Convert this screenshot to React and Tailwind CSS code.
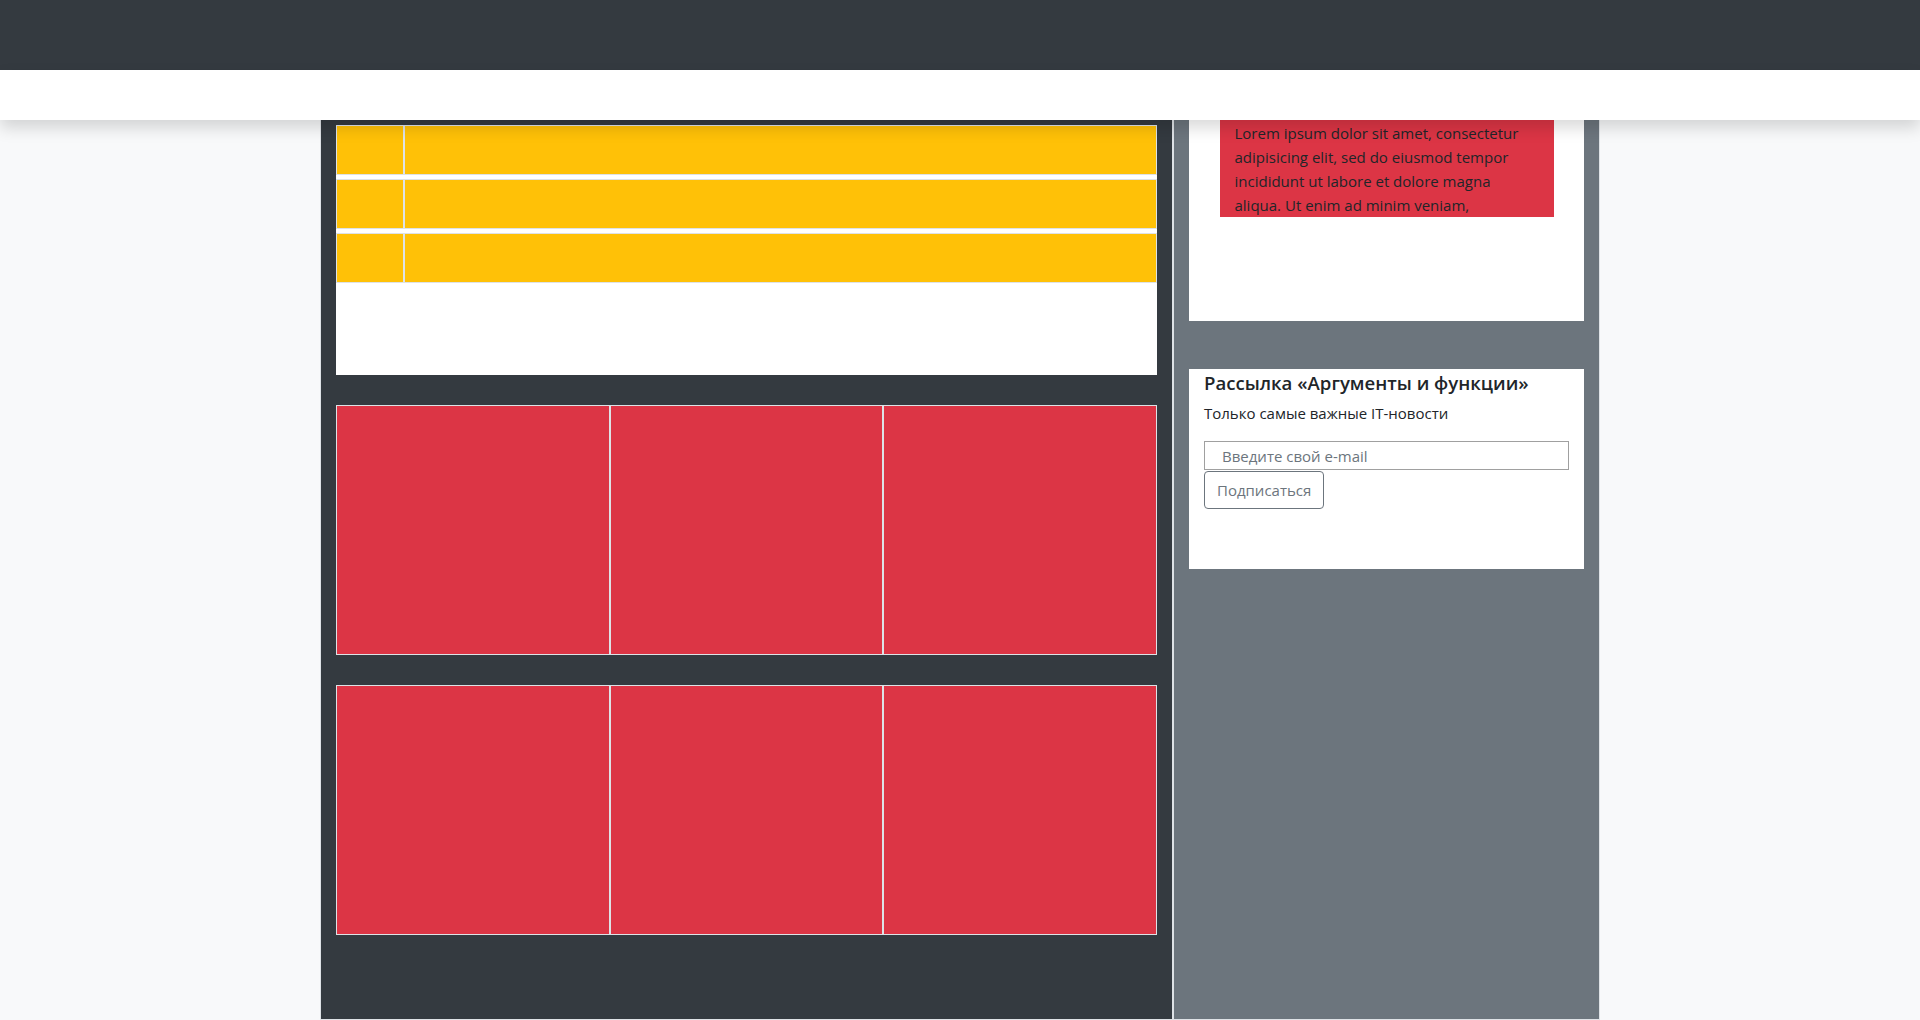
import React from 'react';

const font = "font-['Open_Sans','Noto_Sans',sans-serif]";

function YellowRow() {
  return (
    <div className="flex h-[50px]">
      <div className="w-[68px] border border-[#dee2e6] bg-[#ffc107]"></div>
      <div className="flex-1 border border-[#dee2e6] bg-[#ffc107]"></div>
    </div>
  );
}

function RedGrid() {
  return (
    <div className="mt-[30px] flex h-[250px]">
      {[0, 1, 2].map((i) => (
        <div key={i} className="flex-1 border border-[#dee2e6] bg-[#dc3545]"></div>
      ))}
    </div>
  );
}

export default function App() {
  return (
    <div className={`min-h-screen bg-[#f8f9fa] text-[#212529] ${font}`}>
      <div className="h-[70px] bg-[#343a40]"></div>
      <div className="relative z-10 h-[50px] bg-white shadow-[0_8px_16px_rgba(0,0,0,0.15)]"></div>

      <div className="mx-auto flex w-[1280px]">
        <div className="h-[900px] w-[853px] border-x border-b border-[#dee2e6] bg-[#343a40] px-[15px] pt-[5px]">
          <div className="flex h-[250px] flex-col gap-[4px] bg-white">
            <YellowRow />
            <YellowRow />
            <YellowRow />
          </div>
          <RedGrid />
          <RedGrid />
        </div>

        <div className="h-[900px] w-[427px] border-x border-b border-[#dee2e6] bg-[#6c757d] px-[15px]">
          <div className="h-[201px] bg-white">
            <div className="mx-auto h-[97px] w-[334px] overflow-hidden bg-[#dc3545] px-[15px] pt-px text-[15px] leading-[24px] text-[#212529]">
              Lorem ipsum dolor sit amet, consectetur
              <br />
              adipisicing elit, sed do eiusmod tempor
              <br />
              incididunt ut labore et dolore magna
              <br />
              aliqua. Ut enim ad minim veniam,
            </div>
          </div>

          <div className="mt-[48px] h-[200px] bg-white px-[15px] pt-[2px]">
            <h5 className="mb-[6px] text-[18.6px] font-semibold leading-[24px]">Рассылка «Аргументы и функции»</h5>
            <p className="mb-[16px] text-[15px] leading-[24px]">Только самые важные IT-новости</p>
            <input
              type="email"
              placeholder="Введите свой e-mail"
              className="block h-[29px] w-full border border-[#a0a0a0] px-[17px] text-[15px] placeholder:text-[#6c757d] outline-none"
            />
            <button
              type="button"
              className="mt-px h-[38px] rounded border border-[#6c757d] px-[12px] text-[15px] text-[#6c757d]"
            >
              Подписаться
            </button>
          </div>
        </div>
      </div>
    </div>
  );
}
